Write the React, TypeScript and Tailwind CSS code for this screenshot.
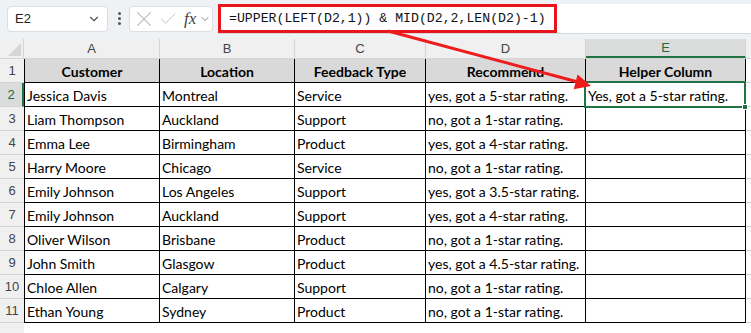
import { Check, ChevronDown, X } from "lucide-react";

const rows = [
  ["Jessica Davis", "Montreal", "Service", "yes, got a 5-star rating.", "Yes, got a 5-star rating."],
  ["Liam Thompson", "Auckland", "Support", "no, got a 1-star rating.", ""],
  ["Emma Lee", "Birmingham", "Product", "yes, got a 4-star rating.", ""],
  ["Harry Moore", "Chicago", "Service", "no, got a 1-star rating.", ""],
  ["Emily Johnson", "Los Angeles", "Support", "yes, got a 3.5-star rating.", ""],
  ["Emily Johnson", "Auckland", "Support", "yes, got a 4-star rating.", ""],
  ["Oliver Wilson", "Brisbane", "Product", "no, got a 1-star rating.", ""],
  ["John Smith", "Glasgow", "Product", "yes, got a 4.5-star rating.", ""],
  ["Chloe Allen", "Calgary", "Support", "no, got a 1-star rating.", ""],
  ["Ethan Young", "Sydney", "Product", "no, got a 1-star rating.", ""],
];

const headers = ["Customer", "Location", "Feedback Type", "Recommend", "Helper Column"];
const widths = ["w-[136px] border-l", "w-[135px]", "w-[131px]", "w-[160px]", "w-[160px]"];
const letterWidths = ["w-[136px]", "w-[135px]", "w-[131px]", "w-[160px]", "w-[160px]"];

export default function App() {
  return (
    <div className="relative h-[333px] w-[751px] overflow-hidden bg-white font-['Liberation_Sans',sans-serif]">
      {/* formula bar */}
      <div className="flex h-[39px] items-start bg-[#eff2f5] pl-[7px] pt-[6px]">
        <div className="flex h-[26px] w-[101px] items-center justify-between rounded-[4px] border border-[#dadde1] bg-white pl-[7px] pr-[6px] text-[13px] text-[#222]">
          E2
          <ChevronDown size={14} className="text-[#555]" />
        </div>
        <div className="ml-[10px] mt-[6px] flex flex-col gap-[2px]">
          <span className="h-[3px] w-[3px] rounded-full bg-[#555]" />
          <span className="h-[3px] w-[3px] rounded-full bg-[#555]" />
          <span className="h-[3px] w-[3px] rounded-full bg-[#555]" />
        </div>
        <div className="ml-[8px] flex h-[26px] w-[84px] items-center rounded-[4px] border border-[#dadde1] bg-white pl-[1px] text-[#c2c2c2]">
          <X size={26} strokeWidth={1} />
          <Check size={20} strokeWidth={1.2} className="ml-[1px]" />
          <span className="ml-[6px] font-['Liberation_Serif',serif] text-[17px] italic text-[#444]">fx</span>
          <ChevronDown size={12} className="ml-[3px] text-[#888]" />
        </div>
        <div className="-mt-[2px] ml-[5px] flex h-[30px] flex-1 items-center border-b border-[#d6d9dc] bg-white">
          <div className="flex h-[29px] w-[339px] items-center border-[3px] border-[#e8161c] pl-[8px] font-['Liberation_Mono',monospace] text-[13.2px] text-[#111]">
            =UPPER(LEFT(D2,1)) &amp; MID(D2,2,LEN(D2)-1)
          </div>
        </div>
      </div>

      {/* column letters */}
      <div className="flex h-[20px] border-b border-[#d4d4d4] bg-[#f0f0f0] text-[13px] text-[#444]">
        <div className="relative w-[24px] border-r border-[#d4d4d4]">
          <svg className="absolute bottom-[2px] right-[2px]" width="13" height="13">
            <path d="M13 0 L13 13 L0 13 Z" fill="#d6d6d6" />
          </svg>
        </div>
        {["A", "B", "C", "D", "E"].map((l, i) => (
          <div
            key={l}
            className={`flex items-center justify-center border-r border-[#d4d4d4] ${letterWidths[i]} ${
              l === "E" ? "border-b-2 border-b-[#217346] bg-[#d9dcdb] text-[#1e6b40]" : ""
            }`}
          >
            {l}
          </div>
        ))}
        <div className="flex-1" />
      </div>

      {/* header row */}
      <div className="flex h-[24px] font-['Lato',sans-serif]">
        <div className="flex w-[24px] items-center justify-center border-b border-[#d4d4d4] bg-[#f0f0f0] font-['Liberation_Sans',sans-serif] text-[13px] text-[#444]">1</div>
        {headers.map((h, i) => (
          <div
            key={h}
            className={`flex items-center justify-center border-b border-r border-black bg-[#d9d9d9] pt-[2px] text-[14px] font-bold text-black ${widths[i]}`}
          >
            {h}
          </div>
        ))}
        <div className="flex-1 border-b border-[#d4d4d4]" />
      </div>

      {rows.map((r, ri) => (
        <div key={ri} className="flex h-[24px] font-['Lato',sans-serif]">
          <div
            className={`flex w-[24px] items-center justify-center border-b border-[#d4d4d4] font-['Liberation_Sans',sans-serif] text-[13px] ${
              ri === 0 ? "border-r-2 border-r-[#217346] bg-[#d9dcdb] text-[#1e6b40]" : "bg-[#f0f0f0] text-[#444]"
            }`}
          >
            {ri + 2}
          </div>
          {r.map((c, ci) => (
            <div
              key={ci}
              className={`flex items-center border-b border-r border-black pl-[2px] pt-[2px] text-[14px] text-black ${widths[ci]}`}
            >
              {c}
            </div>
          ))}
          <div className="flex-1 border-b border-[#d4d4d4]" />
        </div>
      ))}

      <div className="flex h-[24px]">
        <div className="w-[24px] bg-[#f0f0f0]" />
      </div>

      {/* selected cell E2 */}
      <div className="absolute left-[584px] top-[81px] h-[27px] w-[162px] border-2 border-[#217346]" />
      <div className="absolute left-[742px] top-[104px] h-[6px] w-[6px] border border-white bg-[#217346]" />

      {/* red arrow */}
      <svg className="pointer-events-none absolute left-0 top-0" width="751" height="333">
        <line x1="388" y1="31" x2="578" y2="82" stroke="#ee1c1c" strokeWidth="3" />
        <path d="M591 86 L573.7 89.2 L577.6 74.6 Z" fill="#ee1c1c" />
      </svg>
    </div>
  );
}
